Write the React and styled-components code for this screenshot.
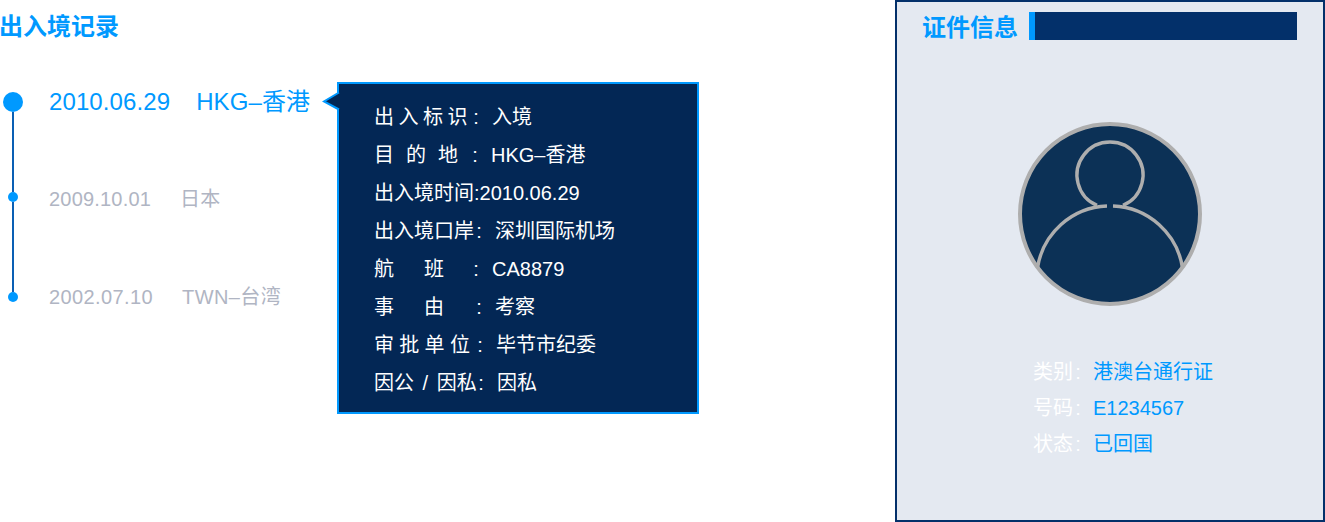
import React from 'react';
import styled, { createGlobalStyle } from 'styled-components';

const Global = createGlobalStyle`
	html, body {
		margin: 0;
		padding: 0;
		background: #fff;
	}
	body {
		font-family: "Liberation Sans", "Noto Sans CJK SC", sans-serif;
	}
`;

const records = [
	{ date: '2010.06.29', place: 'HKG–香港', active: true, gap: 26, rail: 80, tracking: 0.1, line: 20 },
	{ date: '2009.10.01', place: '日本', gap: 29, rail: 90, tracking: 0.2, line: 14 },
	{ date: '2002.07.10', place: 'TWN–台湾', gap: 29, tracking: 0.4, line: 10 }
];

const details = [
	{ label: '出入标识', width: 97, spacing: 4.5, value: '入境' },
	{ label: '目的地', width: 96, spacing: 12, value: 'HKG–香港' },
	{ label: '出入境时间:', value: '2010.06.29', plain: true },
	{ label: '出入境口岸', width: 100, spacing: 0, value: '深圳国际机场' },
	{ label: '航班', width: 97, spacing: 30, value: 'CA8879' },
	{ label: '事由', width: 100, spacing: 30, value: '考察' },
	{ label: '审批单位', width: 101, spacing: 5.3, value: '毕节市纪委' },
	{ label: '因公 / 因私', width: 102, spacing: 0, word: 3, value: '因私' }
];

const info = [
	{ label: '类别', value: '港澳台通行证' },
	{ label: '号码', value: 'E1234567' },
	{ label: '状态', value: '已回国' }
];

const Page = styled.div`
	display: flex;
	width: 1325px;
	height: 522px;
	overflow: hidden;
`;

const History = styled.section`
	flex: 1;
	min-width: 0;
`;

const Title = styled.h2`
	margin: 0 0 0 -1px;
	padding-top: 13px;
	font-size: 24px;
	line-height: 28px;
	font-weight: 700;
	color: #0099ff;
	white-space: nowrap;
`;

const HistoryBody = styled.div`
	display: flex;
	align-items: flex-start;
	margin-top: 41px;
`;

const Timeline = styled.ol`
	width: 337px;
	flex: none;
	margin: 0;
	padding: 10px 0 0;
	list-style: none;
`;

const Record = styled.li`
	display: grid;
	grid-template-columns: 26px 1fr;
	column-gap: 23px;
`;

const Marker = styled.div`
	display: flex;
	flex-direction: column;
	align-items: center;
`;

const Dot = styled.span`
	flex: none;
	width: ${p => (p.$big ? 20 : 10)}px;
	height: ${p => (p.$big ? 20 : 10)}px;
	border-radius: 50%;
	background: #0099ff;
`;

const Rail = styled.span`
	flex: none;
	width: 2px;
	height: ${p => p.$height}px;
	background: #0a5fb4;
`;

const RecordText = styled.div`
	height: ${p => (p.$active ? 20 : 10)}px;
	line-height: ${p => p.$line}px;
	font-size: ${p => (p.$active ? 24 : 20)}px;
	letter-spacing: ${p => p.$tracking}px;
	color: ${p => (p.$active ? '#0099ff' : '#b0b5c3')};
	white-space: nowrap;
`;

const Place = styled.span`
	margin-left: ${p => p.$gap}px;
`;

const Popover = styled.div`
	position: relative;
	flex: none;
	box-sizing: border-box;
	width: 362px;
	height: 332px;
	padding: 14px 0 0 35px;
	background: #032755;
	border: 2px solid #0099ff;
`;

const Arrow = styled.svg`
	position: absolute;
	left: -17px;
	top: 7px;
	display: block;
`;

const DetailRow = styled.div`
	display: flex;
	height: 38px;
	line-height: 38px;
	font-size: 20px;
	color: #fff;
	white-space: pre;
`;

const Label = styled.span`
	flex: none;
	width: ${p => (p.$width ? `${p.$width}px` : 'auto')};
	letter-spacing: ${p => p.$spacing || 0}px;
	word-spacing: ${p => p.$word || 0}px;
`;

const Colon = styled.span`
	flex: none;
	width: 10px;
	margin-right: ${p => p.$after}px;
	text-align: center;
`;

const Card = styled.aside`
	flex: none;
	box-sizing: border-box;
	width: 430px;
	height: 522px;
	background: #e4e9f1;
	border: 2px solid #03306a;
`;

const CardHeader = styled.header`
	display: flex;
	align-items: center;
	gap: 11px;
	margin: 10px 26px 0 25px;
	height: 28px;
`;

const CardTitle = styled.h2`
	margin: 0;
	padding-top: 3px;
	font-size: 24px;
	line-height: 28px;
	font-weight: 700;
	color: #0099ff;
	white-space: nowrap;
`;

const TitleBar = styled.div`
	flex: 1;
	height: 28px;
	background: #03306a;
	border-left: 6px solid #0099ff;
`;

const Avatar = styled.svg`
	display: block;
	margin: 82px auto 0;
`;

const InfoList = styled.div`
	margin: 48px 0 0 136px;
`;

const InfoRow = styled.div`
	display: flex;
	height: 36px;
	line-height: 36px;
	font-size: 20px;
	white-space: nowrap;
`;

const InfoLabel = styled.span`
	display: flex;
	flex: none;
	color: #fff;
`;

const InfoValue = styled.span`
	color: #0099ff;
`;

const AvatarIcon = () => (
	<Avatar width="184" height="184" viewBox="0 0 184 184" fill="none">
		<circle cx="92" cy="92" r="90" fill="#0c3156" stroke="#aeaeae" strokeWidth="4" />
		<g stroke="#aeaeae" strokeWidth="3.4">
			<path d="M79 83.4A33 33 0 1 1 105 83.4" />
			<path d="M19.5 146A73 73 0 0 1 89 84" />
			<path d="M95 84A73 73 0 0 1 164.5 146" />
		</g>
	</Avatar>
);

const App = () => (
	<Page>
		<Global />
		<History>
			<Title>出入境记录</Title>
			<HistoryBody>
				<Timeline>
					{records.map(r => (
						<Record key={r.date}>
							<Marker>
								<Dot $big={r.active} />
								{r.rail && <Rail $height={r.rail} />}
							</Marker>
							<RecordText $active={r.active} $tracking={r.tracking} $line={r.line}>
								{r.date}
								<Place $gap={r.gap}>{r.place}</Place>
							</RecordText>
						</Record>
					))}
				</Timeline>
				<Popover>
					<Arrow width="18" height="20" viewBox="0 0 18 20">
						<path d="M17 1.5L2 10.5L17 18.5" fill="#032755" stroke="#0099ff" strokeWidth="2" />
					</Arrow>
					{details.map(d => (
						<DetailRow key={d.label}>
							<Label $width={d.width} $spacing={d.spacing} $word={d.word}>
								{d.label}
							</Label>
							{!d.plain && <Colon $after={11}>:</Colon>}
							<span>{d.value}</span>
						</DetailRow>
					))}
				</Popover>
			</HistoryBody>
		</History>
		<Card>
			<CardHeader>
				<CardTitle>证件信息</CardTitle>
				<TitleBar />
			</CardHeader>
			<AvatarIcon />
			<InfoList>
				{info.map(i => (
					<InfoRow key={i.label}>
						<InfoLabel>
							{i.label}
							<Colon $after={10}>:</Colon>
						</InfoLabel>
						<InfoValue>{i.value}</InfoValue>
					</InfoRow>
				))}
			</InfoList>
		</Card>
	</Page>
);

export default App;
